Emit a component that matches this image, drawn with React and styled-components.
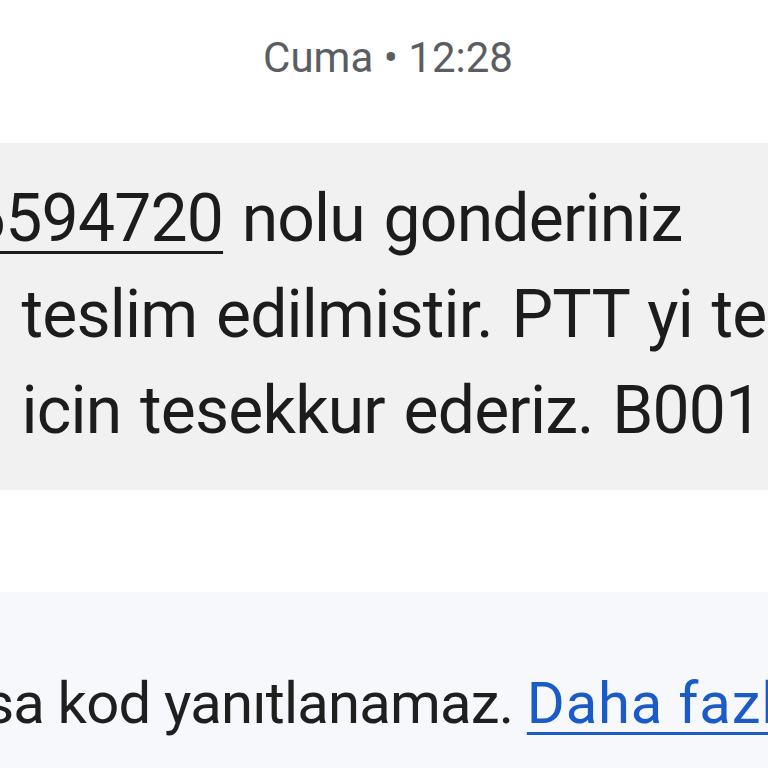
import React from 'react';
import styled, { createGlobalStyle } from 'styled-components';

const GlobalStyle = createGlobalStyle`
    html, body {
        margin: 0;
        padding: 0;
        background: #ffffff;
    }
    body {
        font-family: Roboto, "Noto Sans", "Liberation Sans", sans-serif;
        overflow: hidden;
    }
`;

function App() {
    return (
        <>
            <GlobalStyle />
            <Screen>
                <Stamp>Cuma • 12:28</Stamp>

                <Bubble>
                    <Line>
                        <TrackNo href="#"><Lead $w={204}>RR001</Lead>6594720</TrackNo> nolu gonderiniz
                    </Line>
                    <Line><Lead $w={238} $gap={6}>alicisina</Lead> teslim edilmistir. PTT yi tercih</Line>
                    <Line><Lead $w={238} $gap={6}>ettiginiz</Lead> icin tesekkur ederiz. B001</Line>
                </Bubble>

                <Notice>
                    Kısa kod yanıtlanamaz. <MoreLink href="#">Daha fazla bilgi</MoreLink>
                </Notice>
            </Screen>
        </>
    );
}

const Screen = styled.div`
    width: 768px;
    height: 768px;
    overflow: hidden;
    display: flex;
    flex-direction: column;
    background: #ffffff;
`;

const Stamp = styled.div`
    padding: 33px 0 0 8px;
    font-size: 42px;
    line-height: 50px;
    color: #5a5e63;
    text-align: center;
`;

// message bubble, wider than the viewport so it runs off both sides
const Bubble = styled.div`
    align-self: flex-start;
    width: 1200px;
    margin: 60px 0 0 -271px;
    padding: 28px 36px 31px;
    background: #f1f1f1;
    border-radius: 48px;
    color: #1c1c1c;
    font-size: 66px;
    line-height: 96px;
    letter-spacing: -0.8px;
    word-spacing: 3px;
    white-space: nowrap;
`;

const Line = styled.div``;

const Lead = styled.span`
    display: inline-block;
    box-sizing: border-box;
    width: ${p => p.$w}px;
    height: 96px;
    padding-right: ${p => p.$gap || 0}px;
    overflow: hidden;
    vertical-align: top;
    text-align: right;
`;

const TrackNo = styled.a`
    color: inherit;
    text-decoration: underline;
    text-decoration-thickness: 3px;
    text-underline-offset: 10px;
`;

const Notice = styled.div`
    flex: 1;
    margin: 102px 0 0 -65px;
    padding-top: 71px;
    background: #f6f8fc;
    color: #1f1f1f;
    font-size: 58px;
    line-height: 80px;
    letter-spacing: -0.8px;
    white-space: nowrap;
`;

const MoreLink = styled.a`
    color: #1b5bc8;
    letter-spacing: 0.8px;
    text-decoration: underline;
    text-decoration-thickness: 3px;
    text-underline-offset: 9px;
`;

export default App;
